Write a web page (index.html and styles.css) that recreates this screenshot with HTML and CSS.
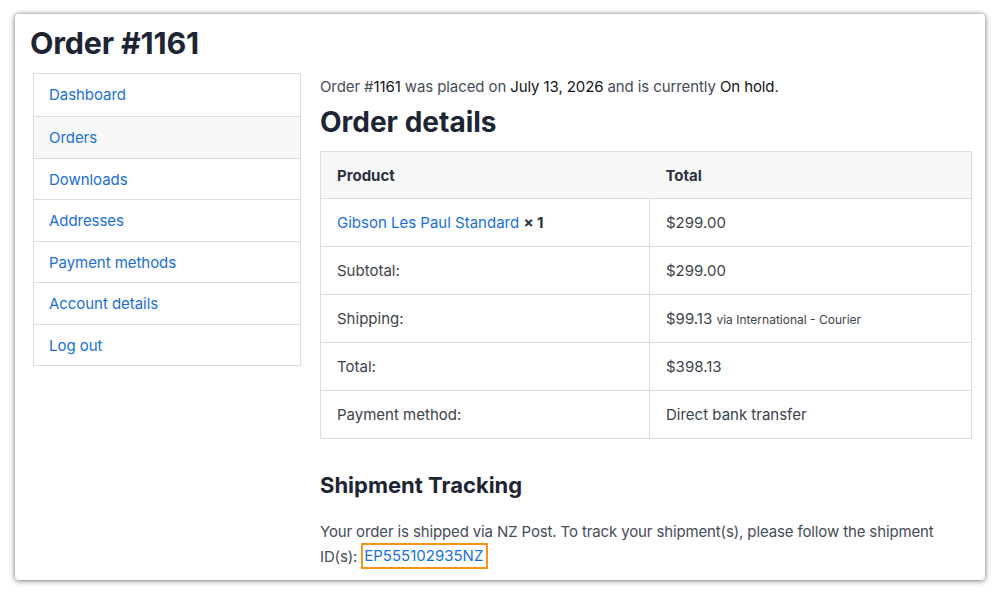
FILE: index.html
```html
<!DOCTYPE html>
<html>
<head>
<meta charset="utf-8">
<link rel="stylesheet" href="styles.css">
</head>
<body>
<div class="card">
  <h1 class="title">Order #1161</h1>
  <div class="layout">
    <nav class="nav">
      <a class="nav-item">Dashboard</a>
      <a class="nav-item active">Orders</a>
      <a class="nav-item">Downloads</a>
      <a class="nav-item">Addresses</a>
      <a class="nav-item">Payment methods</a>
      <a class="nav-item">Account details</a>
      <a class="nav-item">Log out</a>
    </nav>
    <main class="main">
      <p class="intro">Order #<mark>1161</mark> was placed on <mark>July 13, 2026</mark> and is currently <mark>On hold</mark>.</p>
      <h2 class="details-title">Order details</h2>
      <table class="order-table">
        <thead>
          <tr><th class="col-product">Product</th><th>Total</th></tr>
        </thead>
        <tbody>
          <tr><td><a class="link">Gibson Les Paul Standard</a> <strong>× 1</strong></td><td>$299.00</td></tr>
          <tr><td>Subtotal:</td><td>$299.00</td></tr>
          <tr><td>Shipping:</td><td>$99.13 <small>via International - Courier</small></td></tr>
          <tr><td>Total:</td><td>$398.13</td></tr>
          <tr><td>Payment method:</td><td>Direct bank transfer</td></tr>
        </tbody>
      </table>
      <h3 class="tracking-title">Shipment Tracking</h3>
      <p class="tracking-text">Your order is shipped via NZ Post. To track your shipment(s), please follow the shipment ID(s):<a class="link tracking-id">EP555102935NZ</a></p>
    </main>
  </div>
</div>
</body>
</html>
```

FILE: styles.css
```css
html, body {
  margin: 0;
  padding: 0;
  background: #ffffff;
}
body {
  font-family: Inter, "Liberation Sans", sans-serif;
  color: #3c434a;
  padding: 14px 15px 0 15px;
  height: 593px;
  box-sizing: border-box;
  overflow: hidden;
}
.card {
  height: 566px;
  background: #fff;
  border-radius: 4px;
  box-shadow: 0 0 5px rgba(0, 0, 0, 0.45), 0 2px 6px rgba(0, 0, 0, 0.2);
  overflow: hidden;
  padding: 10px 0 0 15px;
  box-sizing: border-box;
}
.title {
  margin: 0;
  font-size: 30.5px;
  line-height: 38px;
  font-weight: 700;
  color: #1d2433;
  letter-spacing: -0.2px;
}
.layout {
  display: grid;
  grid-template-columns: 268px 652px;
  column-gap: 19px;
  margin-top: 11px;
  padding-left: 3px;
}
.nav {
  display: flex;
  flex-direction: column;
  border: 1px solid #dcdde2;
  align-self: start;
}
.nav-item {
  display: block;
  height: 41.5px;
  line-height: 41px;
  padding-left: 15px;
  font-size: 15px;
  letter-spacing: -0.05px;
  color: #1a6fd6;
  border-top: 1px solid #dcdde2;
  box-sizing: border-box;
}
.nav-item:first-child {
  border-top: none;
  height: 42px;
}
.nav-item.active {
  background: #f8f8f9;
}
.main {
  min-width: 0;
}
.intro {
  margin: 4px 0 0 0;
  font-size: 15px;
  line-height: 20px;
  letter-spacing: -0.1px;
  color: #464c58;
}
.intro mark {
  background: none;
  color: #111418;
}
.details-title {
  margin: 6px 0 0 0;
  font-size: 28px;
  line-height: 38px;
  font-weight: 700;
  color: #1d2433;
}
.order-table {
  margin-top: 10px;
  width: 652px;
  border-collapse: collapse;
  border: 1px solid #dcdde2;
  font-size: 15px;
  color: #3c434a;
}
.order-table th,
.order-table td {
  border: 1px solid #dcdde2;
  text-align: left;
  padding: 0 16px;
  height: 48px;
  box-sizing: border-box;
}
.order-table thead th {
  background: #f8f8f9;
  font-weight: 700;
  color: #2c3340;
  border-left: none;
  border-right: none;
  height: 47px;
}
.order-table th.col-product {
  width: 329px;
}
.order-table td strong {
  color: #2c3340;
}
.order-table small {
  font-size: 12px;
}
.link {
  color: #1a6fd6;
  text-decoration: none;
}
.tracking-title {
  margin: 32px 0 0 0;
  font-size: 22px;
  line-height: 28px;
  font-weight: 700;
  color: #1d2433;
}
.tracking-text {
  margin: 20px 0 0 0;
  font-size: 15px;
  line-height: 25px;
  letter-spacing: -0.13px;
  color: #464c58;
}
.tracking-id {
  display: inline-block;
  vertical-align: top;
  margin-left: 4px;
  margin-top: -1px;
  border: 2px solid #f7931e;
  padding: 0 3px 0 1px;
  line-height: 22px;
  letter-spacing: 0;
}
```
